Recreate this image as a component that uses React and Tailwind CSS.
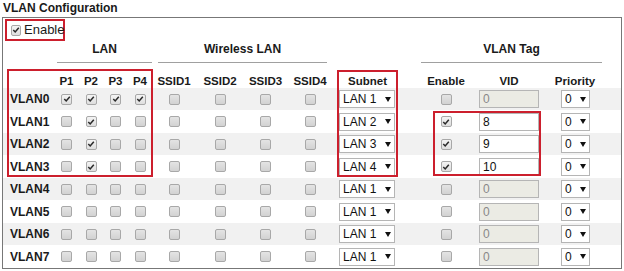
import React from "react";

function Box({ on }) {
  return (
    <span
      className={
        "inline-flex h-[11px] w-[11px] items-center justify-center rounded-[2px] border border-[#a8a8a8] bg-linear-to-b " +
        (on ? "from-[#f4f4f4] to-[#dedede]" : "from-[#e4e4e4] to-[#d2d2d2]")
      }
    >
      {on && (
        <svg viewBox="0 0 10 10" className="h-[8px] w-[8px]">
          <path d="M1.6 5.1 L4 7.5 L8.5 2.3" stroke="#2a2a2a" strokeWidth="1.9" fill="none" />
        </svg>
      )}
    </span>
  );
}

function Sel({ text, w }) {
  return (
    <div
      className={
        "flex h-[18px] items-center justify-between border border-[#b5b5b5] bg-white pl-[3px] pr-[3px] text-[12px] leading-[16px] text-[#111] " +
        w
      }
    >
      <span>{text}</span>
      <svg viewBox="0 0 6 5" className="h-[5px] w-[6px]">
        <path d="M0 0 L6 0 L3 5 Z" fill="#111" />
      </svg>
    </div>
  );
}

const rows = [
  { lan: [1, 1, 1, 1], subnet: "LAN 1", tag: false, vid: "0" },
  { lan: [0, 1, 0, 0], subnet: "LAN 2", tag: true, vid: "8" },
  { lan: [0, 1, 0, 0], subnet: "LAN 3", tag: true, vid: "9" },
  { lan: [0, 1, 0, 0], subnet: "LAN 4", tag: true, vid: "10" },
  { lan: [0, 0, 0, 0], subnet: "LAN 1", tag: false, vid: "0" },
  { lan: [0, 0, 0, 0], subnet: "LAN 1", tag: false, vid: "0" },
  { lan: [0, 0, 0, 0], subnet: "LAN 1", tag: false, vid: "0" },
  { lan: [0, 0, 0, 0], subnet: "LAN 1", tag: false, vid: "0" },
];

const cols =
  "grid grid-cols-[51px_25px_24px_25px_24px_44px_48px_43px_46px_69px_18px_52px_74px_58px_17px]";

export default function App() {
  return (
    <div className="h-[271px] w-[624px] bg-white font-['Liberation_Sans',Arial,sans-serif] text-[#1a1a1a]">
      <div className="h-[17px] pl-[3px] text-[12px] font-bold leading-[16px]">VLAN Configuration</div>
      <div className="relative ml-[2px] w-[620px] border border-[#777]">
        {/* Enable */}
        <div className="ml-[2px] mt-[1px] flex h-[22px] w-[60px] items-center gap-[3px] border-2 border-[#cc1f2d] pl-[4px] text-[13px] leading-[16px]">
          <Box on />
          <span>Enable</span>
        </div>

        {/* group headers */}
        <div className={cols + " h-[22px] text-[12px] font-bold leading-[16px]"}>
          <div className="col-start-2 col-span-4 ml-[3px] border-b border-[#a0a0a0] text-center">LAN</div>
          <div className="col-start-6 col-span-4 mx-[6px] border-b border-[#a0a0a0] text-center">Wireless LAN</div>
          <div className="col-start-12 col-span-3 ml-[1px] mr-[2px] border-b border-[#a0a0a0] text-center">VLAN Tag</div>
        </div>

        {/* column headers */}
        <div className={cols + " h-[24.75px] pt-[11px] text-[11.5px] font-bold leading-[14px]"}>
          <div />
          {["P1", "P2", "P3", "P4", "SSID1", "SSID2", "SSID3", "SSID4", "Subnet"].map((t) => (
            <div key={t} className="text-center">
              {t}
            </div>
          ))}
          <div />
          <div className="text-center">Enable</div>
          <div className="text-center">VID</div>
          <div className="text-center">Priority</div>
          <div />
        </div>

        {/* rows */}
        {rows.map((r, i) => (
          <div key={i} className={cols + " h-[22.5px] items-center " + (i % 2 === 0 ? "bg-[#f1f1f1]" : "bg-white")}>
            <div className="pl-[7px] text-[12px] font-bold leading-[16px]">VLAN{i}</div>
            {r.lan.map((v, j) => (
              <div key={j} className="flex justify-center">
                <Box on={!!v} />
              </div>
            ))}
            {[0, 1, 2, 3].map((j) => (
              <div key={"s" + j} className="flex justify-center">
                <Box />
              </div>
            ))}
            <div className="pl-[6px]">
              <Sel text={r.subnet} w="w-[56px]" />
            </div>
            <div />
            <div className="flex justify-center">
              <Box on={r.tag} />
            </div>
            <div className="pl-[7px]">
              <div
                className={
                  "h-[18px] w-[60px] border border-[#b5b5b5] pl-[3px] text-[12px] leading-[16px] " +
                  (r.tag ? "bg-white text-[#111]" : "bg-[#ebebe4] text-[#888]")
                }
              >
                {r.vid}
              </div>
            </div>
            <div className="pl-[15px]">
              <Sel text="0" w="w-[29px]" />
            </div>
            <div />
          </div>
        ))}

        {/* annotation boxes */}
        <div className="pointer-events-none absolute left-[4px] top-[51px] h-[108px] w-[146px] border-2 border-[#cc1f2d]" />
        <div className="pointer-events-none absolute left-[334px] top-[52px] h-[107px] w-[61px] border-2 border-[#cc1f2d]" />
        <div className="pointer-events-none absolute left-[430px] top-[93px] h-[65px] w-[108px] border-2 border-[#cc1f2d]" />
      </div>
    </div>
  );
}
